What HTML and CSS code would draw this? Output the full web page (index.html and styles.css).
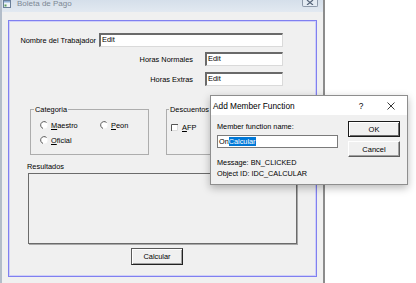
FILE: index.html
```html
<!DOCTYPE html>
<html lang="es">
<head>
  <meta charset="UTF-8">
  <title>Boleta de Pago</title>
  <link rel="stylesheet" href="styles.css">
</head>
<body>
<div class="screen">

  <!-- Dialog being edited -->
  <div class="win">
    <div class="win-title">
      <svg class="win-icon" width="8" height="8" viewBox="0 0 8 8">
        <rect x="0.5" y="0.5" width="7" height="7" fill="#eef3f8" stroke="#6a7f99"/>
        <rect x="1" y="1" width="6" height="1.5" fill="#8fb0d6"/>
        <rect x="1.5" y="4.5" width="2" height="2" fill="#5aa05a"/>
      </svg>
      <span class="win-name">Boleta de Pago</span>
      <div class="win-close">
        <svg width="8" height="5" viewBox="0 0 8 5">
          <path d="M1 0 L7 5 M7 0 L1 5" stroke="#56657a" stroke-width="1.2"/>
        </svg>
      </div>
    </div>

    <div class="win-client">
      <div class="guide">
        <div class="field field-name">
          <span class="field-label">Nombre del Trabajador</span>
          <div class="edit">Edit</div>
        </div>
        <div class="field field-short field-hn">
          <span class="field-label">Horas Normales</span>
          <div class="edit">Edit</div>
        </div>
        <div class="field field-short field-he">
          <span class="field-label">Horas Extras</span>
          <div class="edit">Edit</div>
        </div>

        <div class="groups">
          <div class="group group-cat">
            <span class="group-title">Categoria</span>
            <div class="radios">
              <div class="opt">
                <svg width="8" height="8" viewBox="0 0 8 8"><circle cx="4" cy="4" r="3.5" fill="#fff"/><path d="M6.5 1.5 A3.5 3.5 0 1 0 3 7.4" fill="none" stroke="#555" stroke-width="1"/></svg>
                <span><u>M</u>aestro</span>
              </div>
              <div class="opt">
                <svg width="8" height="8" viewBox="0 0 8 8"><circle cx="4" cy="4" r="3.5" fill="#fff"/><path d="M6.5 1.5 A3.5 3.5 0 1 0 3 7.4" fill="none" stroke="#555" stroke-width="1"/></svg>
                <span><u>P</u>eon</span>
              </div>
              <div class="opt">
                <svg width="8" height="8" viewBox="0 0 8 8"><circle cx="4" cy="4" r="3.5" fill="#fff"/><path d="M6.5 1.5 A3.5 3.5 0 1 0 3 7.4" fill="none" stroke="#555" stroke-width="1"/></svg>
                <span><u>O</u>ficial</span>
              </div>
            </div>
          </div>
          <div class="group group-desc">
            <span class="group-title">Descuentos</span>
            <div class="opt check">
              <svg width="7" height="7" viewBox="0 0 7 7"><rect width="7" height="7" fill="#fff"/><path d="M0.5 7 V0.5 H7" fill="none" stroke="#555"/><path d="M1 6.5 H6.5 V1" fill="none" stroke="#ddd"/></svg>
              <span><u>A</u>FP</span>
            </div>
          </div>
        </div>

        <div class="res-label">Resultados</div>
        <div class="res-box"></div>
        <div class="btn btn-calc">Calcular</div>
      </div>
    </div>
  </div>

  <!-- Class wizard popup -->
  <div class="popup">
    <div class="popup-title">
      <span>Add Member Function</span>
      <span class="popup-help">?</span>
      <svg class="popup-x" width="8" height="8" viewBox="0 0 8 8">
        <path d="M0.5 0.5 L7.5 7.5 M7.5 0.5 L0.5 7.5" stroke="#222" stroke-width="0.9"/>
      </svg>
    </div>
    <div class="popup-body">
      <div class="pf">
        <div class="pf-label">Member function name:</div>
        <div class="pf-edit">On<span class="sel">Calcular</span></div>
        <div class="pf-info pf-msg">Message: BN_CLICKED</div>
        <div class="pf-info">Object ID: IDC_CALCULAR</div>
      </div>
      <div class="pb">
        <div class="pbtn def">OK</div>
        <div class="pbtn">Cancel</div>
      </div>
    </div>
  </div>

</div>
</body>
</html>
```

FILE: styles.css
```css
body {
  margin: 0;
  background-color: #fff;
  font-family: "Liberation Sans", Arial, sans-serif;
  font-size: 7.4px;
  color: #000;
}

.screen {
  position: relative;
  width: 416px;
  height: 283px;
  overflow: hidden;
}

/* Main window */
.win {
  width: 325px;
  height: 283px;
  box-sizing: border-box;
  border-left: 2px solid #b3bdc9;
  border-right: 2px solid #8c8c8c;
  background-color: #f0f0f0;
  display: flex;
  flex-direction: column;
}

.win-title {
  height: 12px;
  flex-shrink: 0;
  background: linear-gradient(#d5dfea, #e2e9f1);
  display: flex;
  align-items: flex-start;
}

.win-icon {
  margin-left: 1px;
}

.win-name {
  margin-left: 6px;
  font-size: 8px;
  line-height: 8px;
  color: #7d8894;
}

.win-close {
  margin-left: auto;
  margin-right: 5px;
  width: 16px;
  height: 7px;
  box-sizing: border-box;
  border: 1px solid #8d99a9;
  border-top: 0;
  border-radius: 0 0 2px 2px;
  background-color: #e4ebf3;
  display: flex;
  justify-content: center;
  align-items: flex-start;
}

.win-client {
  flex: 1;
  padding: 8px 0 0 6px;
}

.guide {
  width: 309px;
  height: 257px;
  box-sizing: border-box;
  border: 1px solid #8080f0;
  box-shadow: inset 0 0 0 1px #d0d0f8;
}

/* Edit rows */
.field {
  width: 274px;
  height: 14px;
  display: flex;
  align-items: center;
  justify-content: flex-end;
}

.field-name {
  margin-top: 12px;
}

.field-hn {
  margin-top: 5px;
}

.field-he {
  margin-top: 6px;
}

.field-label {
  line-height: 9px;
}

.field-name .edit {
  width: 184px;
  margin-left: 3px;
}

.field-short .field-label {
  margin-right: 12px;
}

.field-short .edit {
  width: 78px;
}

.edit {
  height: 14px;
  box-sizing: border-box;
  background-color: #fff;
  border-top: 2px solid #6a6a6a;
  border-left: 2px solid #6a6a6a;
  border-right: 1px solid #dadada;
  border-bottom: 1px solid #dadada;
  padding-left: 1px;
  line-height: 10px;
}

/* Group boxes */
.groups {
  display: flex;
  margin-top: 23px;
}

.group {
  height: 46px;
  box-sizing: border-box;
  border: 1px solid #adadad;
  display: flex;
  flex-direction: column;
  align-items: flex-start;
}

.group-cat {
  margin-left: 21px;
  width: 119px;
}

.group-desc {
  margin-left: 17px;
  width: 118px;
}

.group-title {
  margin: -5px 0 0 3px;
  padding: 0 1px;
  background-color: #f0f0f0;
  line-height: 9px;
}

.group-desc .group-title {
  margin-left: 2px;
}

.radios {
  display: grid;
  grid-template-columns: 60px auto;
  row-gap: 5px;
  margin: 6px 0 0 9px;
}

.opt {
  height: 10px;
  display: flex;
  align-items: center;
}

.opt svg {
  margin-right: 3px;
}

.check {
  margin: 8px 0 0 4px;
}

.check svg {
  margin-right: 4px;
}

/* Results */
.res-label {
  margin: 7px 0 0 18px;
  line-height: 9px;
}

.res-box {
  margin: 2px 0 0 19px;
  width: 269px;
  height: 71px;
  box-sizing: border-box;
  border: 1px solid #6b6b6b;
  box-shadow: 1px 1px 0 #a8a8a8;
}

.btn {
  box-sizing: border-box;
  border: 1px solid #5a5a5a;
  border-right-color: #222;
  border-bottom-color: #222;
  box-shadow: inset 1px 1px 0 #fff, inset -1px -1px 0 #a0a0a0;
  background-color: #f0f0f0;
  display: flex;
  align-items: center;
  justify-content: center;
}

.btn-calc {
  margin: 4px 0 0 122px;
  width: 52px;
  height: 17px;
}

/* Popup dialog */
.popup {
  position: absolute;
  left: 210px;
  top: 95px;
  width: 198px;
  height: 90px;
  box-sizing: border-box;
  border: 1px solid #8e8e8e;
  background-color: #f0f0f0;
  box-shadow: 0 3px 8px rgba(0, 0, 0, 0.28);
  display: flex;
  flex-direction: column;
  font-size: 7.3px;
}

.popup-title {
  height: 19px;
  flex-shrink: 0;
  background-color: #fff;
  display: flex;
  align-items: center;
  padding-left: 2px;
  font-size: 8.3px;
}

.popup-help {
  margin-left: auto;
  width: 8px;
  text-align: center;
}

.popup-x {
  margin: 0 12px 0 22px;
}

.popup-body {
  flex: 1;
  display: flex;
  padding: 0 7px 0 6px;
}

.pf {
  flex: 1;
}

.pf-label {
  margin-top: 7px;
  line-height: 9px;
}

.pf-edit {
  margin-top: 4px;
  width: 121px;
  height: 13px;
  box-sizing: border-box;
  border: 1px solid #7a7a7a;
  background-color: #fff;
  padding-left: 1px;
  line-height: 11px;
}

.sel {
  background-color: #0078d7;
  color: #fff;
}

.pf-info {
  margin-top: 2px;
  line-height: 9px;
}

.pf-msg {
  margin-top: 10px;
}

.pb {
  width: 52px;
  margin-top: 6px;
  display: flex;
  flex-direction: column;
  gap: 4px;
}

.pbtn {
  height: 16px;
  box-sizing: border-box;
  border: 1px solid;
  border-color: #fff #5e5e5e #5e5e5e #fff;
  box-shadow: inset -1px -1px 0 #a0a0a0;
  background-color: #f0f0f0;
  display: flex;
  align-items: center;
  justify-content: center;
  font-size: 7.5px;
}

.pbtn.def {
  border-color: #1a1a1a;
  box-shadow: inset 1px 1px 0 #fff, inset -1px -1px 0 #6a6a6a;
}
```
